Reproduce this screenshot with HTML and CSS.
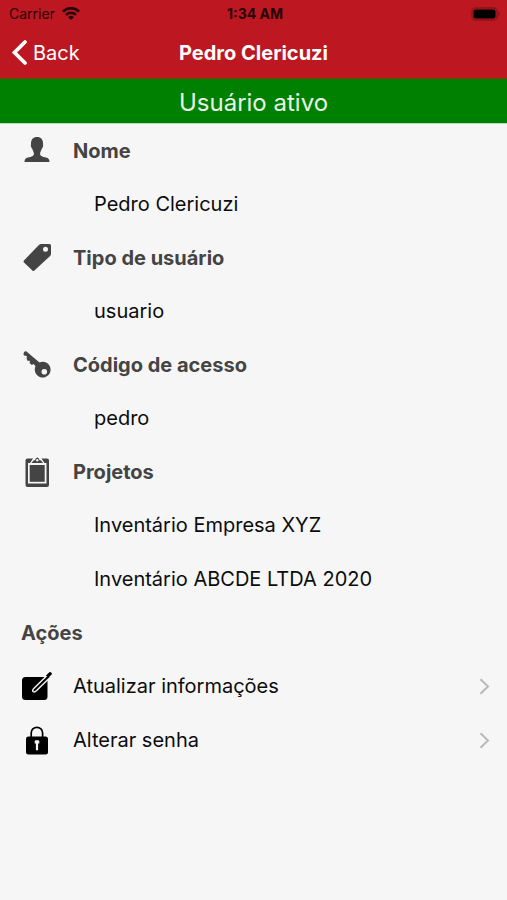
FILE: index.html
```html
<!DOCTYPE html>
<html lang="pt-BR">
<head>
<meta charset="utf-8">
<meta name="viewport" content="width=device-width, initial-scale=1">
<title>Pedro Clericuzi</title>
<link rel="stylesheet" href="styles.css">
</head>
<body>
<header class="top">
  <div class="status">
    <span class="carrier">Carrier
      <svg width="18" height="14" viewBox="0 0 18 14" aria-hidden="true"><g fill="none" stroke="#260506" stroke-width="2.6"><path d="M1 4.600a11.300 11.300 0 0 1 16 0"/><path d="M4 7.800a7.100 7.100 0 0 1 10 0"/></g><path d="M9 13L6.200 10.200a4 4 0 0 1 5.600 0z" fill="#260506"/></svg>
    </span>
    <span class="clock">1:34 AM</span>
    <svg class="battery" width="30" height="14" viewBox="0 0 30 14" aria-hidden="true"><rect x="1" y="1" width="25" height="12" rx="3.5" fill="none" stroke="#8b131a" stroke-width="1.3"/><rect x="2.500" y="2.500" width="22" height="9" rx="2" fill="#000"/><path d="M27.500 4.500q2.400 2.500 0 5z" fill="#7b1017"/></svg>
  </div>
  <nav class="bar">
    <a class="back" href="#">
      <svg width="17" height="28" viewBox="0 0 17 28" aria-hidden="true"><path d="M14 3L3.500 13.500 14 24" fill="none" stroke="#fff" stroke-width="3.8" stroke-linecap="round"/></svg>
      Back
    </a>
    <h1>Pedro Clericuzi</h1>
  </nav>
</header>
<p class="banner">Usuário ativo</p>
<main class="list">
  <section>
    <h2><svg class="icon" width="32" height="32" viewBox="0 0 32 32" aria-hidden="true"><path d="M16 2c4 0 6 2.400 6 6.500 0 1.200.3 1.700 0 3-.3 1.400-1 1.600-1.300 2.600-.3 1.400-1.600 2.900-1.600 4.700 0 2.600 3 3 5.900 3.800 2.500.7 3.500 1.600 3.500 4.400h-25c0-2.800 1-3.700 3.500-4.400 2.900-.8 5.900-1.200 5.900-3.800 0-1.800-1.300-3.300-1.600-4.700-.3-1-1-1.200-1.300-2.600-.3-1.300 0-1.800 0-3C10 4.400 12 2 16 2z"/></svg>Nome</h2>
    <p>Pedro Clericuzi</p>
  </section>
  <section>
    <h2><svg class="icon" width="32" height="32" viewBox="0 0 32 32" aria-hidden="true"><path fill-rule="evenodd" d="M20 2h8.500q1.500 0 1.500 1.500v8.300q0 1.200-.9 2.100L13.400 28.600q-1 1-2 0L3 20.400q-1-1 0-2L17.900 2.900q.9-.9 2.100-.9zM24.500 4.800a2.500 2.500 0 1 0 0 5 2.500 2.500 0 0 0 0-5z"/></svg>Tipo de usuário</h2>
    <p>usuario</p>
  </section>
  <section>
    <h2><svg class="icon" width="32" height="32" viewBox="0 0 32 32" aria-hidden="true"><path fill-rule="evenodd" d="M3 3.600Q3.500 2 5.200 2.200L18.500 13.400a7.900 7.900 0 1 1-4 3.900l-1.900-2.300-1.800.9-2.200-2 .3-2.200-2.600.1-.7-2.800.3-2L3 6.600l-.6-1.500zM23.300 20a2.800 2.800 0 1 0 0 5.600 2.800 2.800 0 0 0 0-5.600z"/></svg>Código de acesso</h2>
    <p>pedro</p>
  </section>
  <section>
    <h2><svg class="icon" width="32" height="32" viewBox="0 0 32 32" aria-hidden="true"><path fill-rule="evenodd" d="M6.500 2.500H12L9 7H7v20.500h18.500V7h-2L20.500 2.500H26q2 0 2 2V29q0 2-2 2H6.500q-2 0-2-2V4.500q0-2 2-2z"/><path d="M8.700 9h15v16.800h-15z"/><path fill-rule="evenodd" d="M10.500 7l2.300-2.700h1.300Q14.500 1.500 16.300 1.500t2.200 2.800h1.300L22.100 7zM16.300 3a1.200 1.200 0 1 0 0 2.400 1.200 1.200 0 0 0 0-2.400z"/></svg>Projetos</h2>
    <p>Inventário Empresa XYZ</p>
    <p>Inventário ABCDE LTDA 2020</p>
  </section>
  <section>
    <h2>Ações</h2>
    <a class="action" href="#">
      <svg class="icon" width="32" height="32" viewBox="0 0 32 32" aria-hidden="true"><rect x="1" y="7" width="25.500" height="23" rx="3.500"/><path d="M26.500 5L13 18.200q-2 2-1 3.300 1.400 1.300 3.400-.7L29 7.600" fill="#000" stroke="#f6f6f6" stroke-width="1.400" stroke-linejoin="round"/><path d="M25 5.500L28.300 2.300q.9-.8 1.800.1l.5.500q.8.900 0 1.700L27.400 7.800z"/></svg>
      <span>Atualizar informações</span>
      <svg class="more" width="12" height="18" viewBox="0 0 12 18" aria-hidden="true"><path d="M1.500 2.300L9 9.500l-7.500 7.200"/></svg>
    </a>
    <a class="action" href="#">
      <svg class="icon" width="32" height="32" viewBox="0 0 32 32" aria-hidden="true"><path d="M10.200 14V9a5.700 5.700 0 0 1 11.400 0V14" fill="none" stroke="#000" stroke-width="1.700"/><rect x="5" y="12.500" width="22" height="18" rx="2.500"/><path d="M13.700 17.500q0-1.200 1.200-1.200h2.200q1.200 0 1.200 1.200v2.100h-1.200v6.700h-2.200v-6.700h-1.200z" fill="#f6f6f6"/></svg>
      <span>Alterar senha</span>
      <svg class="more" width="12" height="18" viewBox="0 0 12 18" aria-hidden="true"><path d="M1.500 2.300L9 9.500l-7.500 7.200"/></svg>
    </a>
  </section>
</main>
</body>
</html>
```
FILE: styles.css
```css
* { box-sizing: border-box; }
body {
  margin: 0;
  min-height: 100vh;
  background: #f6f6f6;
  color: #0c0c0c;
  font: 20px/24px Inter, "Liberation Sans", sans-serif;
}
h1, h2, p { margin: 0; }
a { color: inherit; text-decoration: none; }
.top { background: #bd1721; border-bottom: 1px solid #7a4210; }
.status {
  display: grid;
  grid-template-columns: 1fr auto 1fr;
  align-items: center;
  height: 27px;
  padding: 0 6px 0 9px;
  font-size: 14px;
  line-height: 18px;
  color: #260506;
}
.carrier { display: flex; align-items: center; gap: 7px; }
.clock { font-weight: 700; }
.battery { justify-self: end; }
.bar {
  display: grid;
  grid-template-columns: 1fr auto 1fr;
  align-items: center;
  height: 51px;
  padding: 0 11px;
  color: #fff;
}
.back { display: flex; align-items: center; gap: 5px; }
h1 { font-size: 20px; line-height: 24px; font-weight: 700; }
.banner {
  padding: 10px 0 6px;
  background: #008000;
  border-bottom: 1px solid #b5dab5;
  color: #e8f5e8;
  font-size: 24px;
  line-height: 28px;
  text-align: center;
}
h2 {
  display: flex;
  align-items: center;
  gap: 20px;
  height: 53px;
  padding-left: 21px;
  font-size: 20px;
  font-weight: 700;
  color: #444;
}
h2 .icon { fill: #444; }
.list p { padding: 15px 21px 15px 94px; }
.action {
  display: flex;
  align-items: center;
  gap: 20px;
  height: 54px;
  padding: 0 16px 0 21px;
}
.more { margin-left: auto; fill: none; stroke: #b9b9b9; stroke-width: 2; }
```
